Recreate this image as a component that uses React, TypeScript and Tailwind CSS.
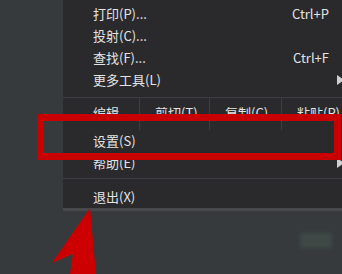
import React from "react";

const font = { fontFamily: '"Noto Sans CJK SC", "Noto Sans", sans-serif' };

function Row({ label, shortcut, sub }: { label: string; shortcut?: string; sub?: boolean }) {
  return (
    <div className="h-[22px] flex items-center pl-[30px] pr-[13px]">
      <span>{label}</span>
      {shortcut && <span className="ml-auto">{shortcut}</span>}
      {/* submenu arrow, mostly clipped at the window edge */}
      {sub && (
        <span className="ml-auto mr-[-15px] w-0 h-0 border-y-[5px] border-y-transparent border-l-[7px] border-l-[#d0d0d0]" />
      )}
    </div>
  );
}

export default function App() {
  return (
    <div
      className="relative w-[342px] h-[274px] overflow-hidden bg-[#363a3d] text-[13px] text-[#e4e4e4]"
      style={font}
    >
      {/* menu */}
      <div className="ml-[63px] w-[279px] h-[211px] bg-[#2a2a2d] border-b-[3px] border-[#47494c] flex flex-col pt-[3px] overflow-hidden">
        <Row label="打印(P)..." shortcut="Ctrl+P" />
        <Row label="投射(C)..." />
        <Row label="查找(F)..." shortcut="Ctrl+F" />
        <Row label="更多工具(L)" sub />
        <div className="h-[6px]" />
        <div className="h-px bg-[#3e3e42]" />
        <div className="h-[32px] flex">
          <div className="w-[77px] pl-[30px] pt-[5px] border-r border-[#3e3e42]">编辑</div>
          <div className="w-[70px] pl-[15px] pt-[5px] border-r border-[#3e3e42]">剪切(T)</div>
          <div className="w-[72px] pl-[15px] pt-[5px] border-r border-[#3e3e42]">复制(C)</div>
          <div className="flex-1 pl-[15px] pt-[5px]">粘贴(P)</div>
        </div>
        <Row label="设置(S)" />
        <Row label="帮助(E)" sub />
        <div className="h-[4px]" />
        <div className="h-px bg-[#3e3e42]" />
        <div className="h-[7px]" />
        <Row label="退出(X)" />
      </div>

      {/* red highlight box */}
      <div className="absolute left-[37px] top-[114px] w-[304px] h-[46px] border-[7px] border-[#c80000]" />

      {/* red arrow */}
      <svg className="absolute left-0 top-0" width="342" height="274" viewBox="0 0 342 274">
        <polygon points="90,208 96,274 70,274 73,254 52,263" fill="#cc0000" />
      </svg>

      {/* blurred smudge */}
      <div className="absolute left-[300px] top-[233px] w-[32px] h-[15px] bg-[#425049] blur-[2px] opacity-70" />
    </div>
  );
}
